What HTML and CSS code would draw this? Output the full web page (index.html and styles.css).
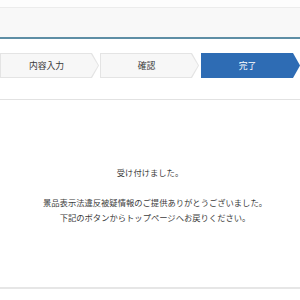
FILE: index.html
```html
<!DOCTYPE html>
<html lang="ja">
<head>
<meta charset="utf-8">
<link rel="stylesheet" href="styles.css">
</head>
<body>
<div class="topgap"></div>
<header class="header"></header>
<nav class="steps">
  <div class="step"><span>内容入力</span></div>
  <div class="step"><span>確認</span></div>
  <div class="step active"><span>完了</span></div>
</nav>
<main class="panel">
  <p class="msg first">受け付けました。</p>
  <p class="msg second">景品表示法違反被疑情報のご提供ありがとうございました。<br>下記のボタンからトップページへお戻りください。</p>
</main>
</body>
</html>
```
FILE: styles.css
```css
html, body {
  margin: 0;
  padding: 0;
  background: #fff;
  font-family: "Noto Sans CJK JP", "Noto Sans", sans-serif;
  color: #444;
}
.topgap {
  height: 7px;
  background: #fdfdfd;
}
.header {
  height: 29px;
  background: #f8f8f8;
  border-top: 1px solid #ececec;
  border-bottom: 2px solid #5e8ea5;
}
.steps {
  display: flex;
  gap: 1px;
  margin-top: 14px;
  height: 25px;
}
.step {
  position: relative;
  flex: 0 0 99px;
  background: #e4e4e4;
  clip-path: polygon(0 0, 92px 0, 99px 50%, 92px 100%, 0 100%);
  display: flex;
  align-items: center;
  justify-content: center;
  font-size: 8.8px;
  color: #3a3a3a;
}
.step::before {
  content: "";
  position: absolute;
  inset: 1px 1px 1px 1px;
  background: #f7f7f7;
  clip-path: polygon(0 0, 90px 0, 97px 50%, 90px 100%, 0 100%);
}
.step span {
  position: relative;
  padding-right: 6px;
}
.step.active {
  margin-left: 1px;
  background: #2e6cb4;
  color: #fff;
}
.step.active::before {
  background: #2e6cb4;
}
.panel {
  margin-top: 21px;
  border-top: 1px solid #e2e2e2;
  border-bottom: 2px solid #e6e6e6;
  height: 190px;
  box-sizing: border-box;
  padding-top: 65px;
  font-size: 8.3px;
  line-height: 15px;
  text-align: center;
  color: #3c3c3c;
}
.msg {
  margin: 0;
}
.msg.first {
  margin-bottom: 15px;
}
.msg.second {
  padding-left: 10px;
}
```
